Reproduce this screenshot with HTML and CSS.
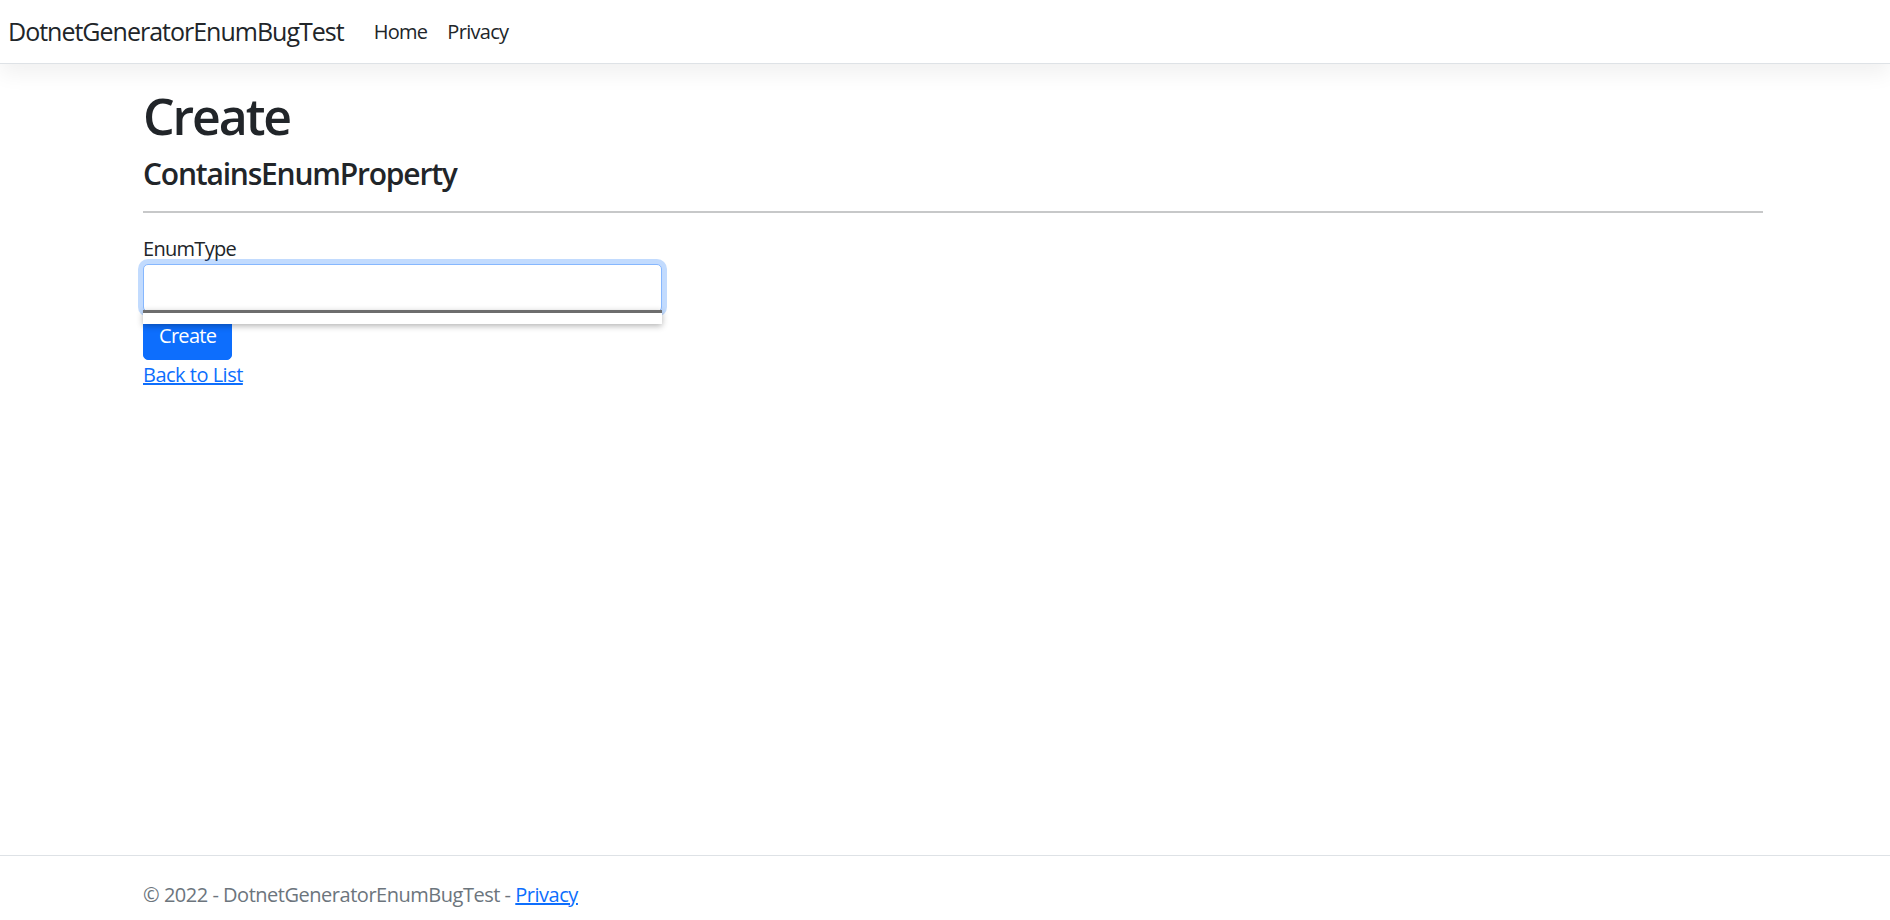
FILE: index.html
```html
<!DOCTYPE html>
<html lang="en">
<head>
<meta charset="utf-8">
<title>Create - DotnetGeneratorEnumBugTest</title>
<link rel="stylesheet" href="styles.css">
</head>
<body>
<header class="site-header">
  <nav class="navbar">
    <a class="navbar-brand" href="#">DotnetGeneratorEnumBugTest</a>
    <ul class="navbar-nav">
      <li><a class="nav-link" href="#">Home</a></li>
      <li><a class="nav-link" href="#">Privacy</a></li>
    </ul>
  </nav>
</header>

<main class="container">
  <h1 class="page-title">Create</h1>
  <h4 class="entity-title">ContainsEnumProperty</h4>
  <hr class="divider">

  <div class="row">
    <div class="col-form">
      <form class="create-form">
        <div class="form-group">
          <label class="control-label">EnumType</label>
          <div class="select-wrap">
            <div class="form-control is-focused"></div>
            <div class="select-popup"></div>
          </div>
        </div>
        <div class="form-group">
          <button type="button" class="btn-primary">Create</button>
        </div>
      </form>
    </div>
  </div>

  <div class="back-link">
    <a href="#">Back to List</a>
  </div>
</main>

<footer class="site-footer">
  <div class="container footer-inner">
    &copy; 2022 - DotnetGeneratorEnumBugTest - <a href="#">Privacy</a>
  </div>
</footer>
</body>
</html>
```

FILE: styles.css
```css
* {
  box-sizing: border-box;
}

html,
body {
  height: 100%;
}

body {
  margin: 0;
  font-family: "Open Sans", "Noto Sans", sans-serif;
  font-size: 20px;
  line-height: 1.5;
  letter-spacing: -0.035em;
  color: #212529;
  background: #fff;
  display: flex;
  flex-direction: column;
  overflow: hidden;
}

a {
  color: #0d6efd;
}

/* Top navigation */
.site-header {
  position: relative;
  z-index: 2;
  margin-bottom: 20px;
}

.navbar {
  height: 64px;
  display: flex;
  align-items: center;
  padding: 0 8px;
  background: #fff;
  border-bottom: 1px solid #dee2e6;
  box-shadow: 0 10px 20px rgba(0, 0, 0, 0.06);
}

.navbar-brand {
  font-size: 25px;
  letter-spacing: -0.04em;
  color: #212529;
  text-decoration: none;
  margin-right: 20px;
  white-space: nowrap;
}

.navbar-nav {
  display: flex;
  list-style: none;
  margin: 0;
  padding: 0;
}

.nav-link {
  display: block;
  padding: 10px;
  color: #212529;
  text-decoration: none;
}

/* Page body */
.container {
  width: 1620px;
  margin-left: 143px;
}

main.container {
  flex: 1;
  padding-top: 2px;
}

.page-title {
  margin: 0 0 10px;
  font-size: 50px;
  font-weight: 600;
  line-height: 1.2;
  letter-spacing: -0.042em;
}

.entity-title {
  margin: 0;
  font-size: 30px;
  font-weight: 600;
  line-height: 1.2;
  letter-spacing: -0.04em;
}

.divider {
  margin: 19px 0 21px;
  border: 0;
  border-top: 2px solid #c7c8c9;
}

.row {
  display: flex;
}

.col-form {
  width: 519px;
}

.create-form {
  margin: 0;
}

.control-label {
  display: block;
}

.select-wrap {
  position: relative;
  z-index: 1;
}

.form-control {
  height: 48px;
  border: 1px solid #86b7fe;
  border-radius: 5px;
  background: #fff;
}

.form-control.is-focused {
  box-shadow: 0 0 0 5px rgba(13, 110, 253, 0.25);
}

/* Open dropdown list of the select, empty */
.select-popup {
  position: absolute;
  left: 0;
  right: 0;
  top: 46px;
  height: 14px;
  background: #fff;
  border-top: 3px solid #6d6d6d;
  box-shadow: 0 2px 6px rgba(0, 0, 0, 0.3);
}

.btn-primary {
  display: block;
  height: 48px;
  padding: 0 15px;
  font: inherit;
  letter-spacing: inherit;
  color: #fff;
  background: #0d6efd;
  border: 1px solid #0d6efd;
  border-radius: 5px;
}

.back-link {
  line-height: 30px;
  letter-spacing: -0.025em;
}

/* Footer */
.site-footer {
  height: 65px;
  border-top: 1px solid #dee2e6;
  color: #6c757d;
}

.footer-inner {
  padding-top: 24px;
  line-height: 30px;
  letter-spacing: -0.024em;
}
```
